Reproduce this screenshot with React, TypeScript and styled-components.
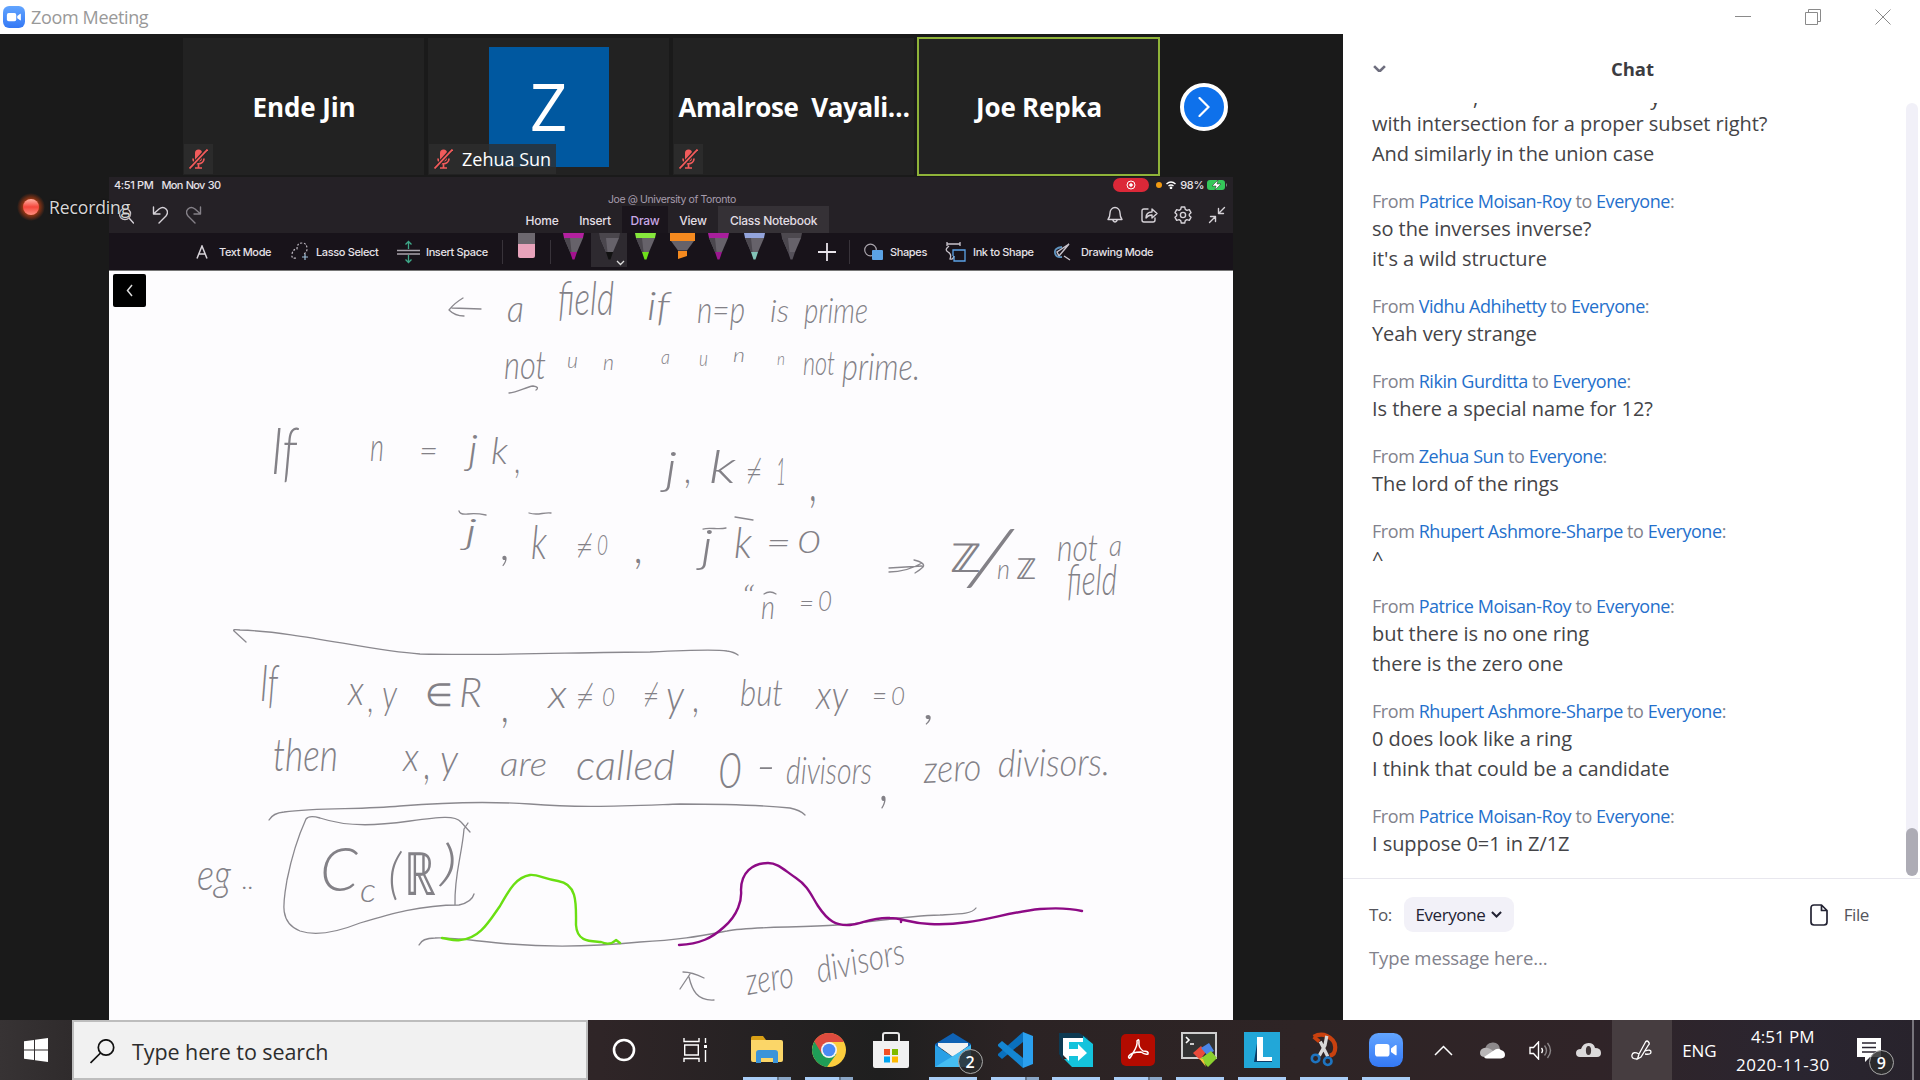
import React from 'react';
import styled, { createGlobalStyle } from 'styled-components';

const ui = `"Open Sans", "Noto Sans", sans-serif`;
const ios = `Inter, Roboto, sans-serif`;

const Global = createGlobalStyle`
  * { box-sizing: border-box; }
  body { margin: 0; background: #fff; font-family: ${ui}; }
  svg { display: block; flex: none; }
`;

const Screen = styled.div`
  width: 1920px;
  height: 1080px;
  display: flex;
  flex-direction: column;
  overflow: hidden;
`;

/* ---------- window title bar ---------- */
const TitleBar = styled.header`
  height: 34px;
  flex: none;
  display: flex;
  align-items: center;
  padding: 0 29px 0 3px;
  background: #fff;
`;
const WindowTitle = styled.span`
  margin-left: 6px;
  flex: 1;
  font-size: 18px;
  letter-spacing: -0.35px;
  color: #999;
`;
const WindowButtons = styled.div`
  display: flex;
  gap: 54px;
`;

const Body = styled.main`
  height: 986px;
  flex: none;
  display: flex;
`;

/* ---------- meeting side ---------- */
const Meeting = styled.section`
  position: relative;
  width: 1343px;
  background: #1a1a1a;
`;
const Gallery = styled.div`
  height: 143px;
  padding: 4px 0 0 183px;
  display: flex;
  gap: 4px;
`;
const Tile = styled.div<{ $active?: boolean }>`
  position: relative;
  width: 241px;
  height: 137px;
  display: flex;
  align-items: center;
  justify-content: center;
  background: #222;
  outline: ${(p) => (p.$active ? '2px solid #8fb339' : 'none')};
  outline-offset: -1px;
`;
const TileName = styled.span<{ $ls: number }>`
  padding-left: 1px;
  font-size: 26px;
  font-weight: 700;
  color: #fff;
  white-space: pre;
  letter-spacing: ${(p) => p.$ls}px;
`;
const Avatar = styled.div`
  width: 120px;
  height: 120px;
  display: flex;
  align-items: center;
  justify-content: center;
  background: #0058a0;
  color: #fff;
  font-size: 65px;
  line-height: 1;
`;
const Tag = styled.div`
  position: absolute;
  left: 1px;
  bottom: 1px;
  height: 30px;
  padding: 0 5px;
  display: flex;
  align-items: center;
  gap: 9px;
  background: rgba(46, 46, 46, 0.78);
  color: #fff;
  font-size: 18px;
  letter-spacing: 0;
`;
const NextButton = styled.div`
  margin: 45px 0 0 17px;
  width: 48px;
  height: 48px;
  border: 4px solid #fff;
  border-radius: 50%;
  background: #0e71eb;
  display: flex;
  align-items: center;
  justify-content: center;
`;
const Recording = styled.div`
  position: absolute;
  left: 17px;
  top: 157px;
  height: 32px;
  display: flex;
  align-items: center;
  gap: 4px;
  font-size: 17.5px;
  letter-spacing: -0.1px;
  color: #d8d8d8;
  text-shadow: 0 0 2px #000;
`;

/* ---------- shared iPad screen ---------- */
const Shared = styled.div`
  width: 1124px;
  height: 843px;
  margin-left: 109px;
  display: flex;
  flex-direction: column;
  font-family: ${ios};
  color: #e6e2e8;
`;
const StatusRow = styled.div`
  height: 16px;
  display: flex;
  align-items: center;
  background: #252126;
  padding: 0 5px 0 5px;
  font-size: 11px;
  font-weight: 500;
  letter-spacing: -0.35px;
`;
const StatusDate = styled.span`
  margin-left: 8px;
  letter-spacing: -0.75px;
  word-spacing: 1px;
`;
const StatusRight = styled.div`
  margin-left: auto;
  display: flex;
  align-items: center;
`;
const Percent = styled.span`
  margin: 0 3px 0 4px;
`;
const RecPill = styled.div`
  width: 36px;
  height: 14px;
  margin-right: -4px;
  position: relative;
  left: 0;
  border-radius: 7px;
  background: #dc2838;
  display: flex;
  align-items: center;
  justify-content: center;
`;
const OrangeDot = styled.i`
  width: 6px;
  height: 6px;
  margin: 0 4px 0 11px;
  border-radius: 50%;
  background: #f39a12;
`;
const Notebook = styled.div`
  height: 40px;
  background: #252126;
  display: flex;
`;
const NotebookSide = styled.div<{ $w: number; $gap: number; $pad: number }>`
  width: ${(p) => p.$w}px;
  padding: 13px 0 0 ${(p) => p.$pad}px;
  display: flex;
  gap: ${(p) => p.$gap}px;
`;
const NotebookMid = styled.div`
  width: 313px;
  display: flex;
  flex-direction: column;
`;
const NotebookTitle = styled.div`
  height: 13px;
  padding-left: 92px;
  font-size: 10.5px;
  line-height: 13px;
  color: #a79dad;
  letter-spacing: -0.4px;
  white-space: nowrap;
`;
const Tabs = styled.div`
  height: 27px;
  display: flex;
`;
const Tab = styled.div<{ $w: number; $bg?: string; $on?: boolean }>`
  width: ${(p) => p.$w}px;
  text-align: center;
  line-height: 29px;
  font-size: 12px;
  font-weight: 500;
  letter-spacing: -0.25px;
  white-space: nowrap;
  background: ${(p) => p.$bg ?? 'transparent'};
  color: ${(p) => (p.$on ? '#c9a8e6' : '#e2dee4')};
`;
const Tools = styled.div`
  height: 38px;
  background: #18131a;
  display: flex;
  border-bottom: 1px solid #777;
`;
const Tool = styled.div<{ $w: number; $gap?: number; $pad?: number }>`
  width: ${(p) => p.$w}px;
  height: 37px;
  padding-left: ${(p) => p.$pad ?? 0}px;
  display: flex;
  align-items: center;
  gap: ${(p) => p.$gap ?? 0}px;
  flex: none;
  font-size: 11px;
  font-weight: 500;
  letter-spacing: -0.37px;
  white-space: nowrap;
`;
const PenSlot = styled.div<{ $w: number; $on?: boolean }>`
  position: relative;
  width: ${(p) => p.$w}px;
  height: 34px;
  flex: none;
  display: flex;
  justify-content: center;
  background: ${(p) => (p.$on ? '#2e2a30' : 'transparent')};
`;
const PenCaret = styled.svg`
  position: absolute;
  right: 2px;
  bottom: 1px;
`;
const Rule = styled.i<{ $ml: number; $mr: number }>`
  width: 1px;
  height: 24px;
  flex: none;
  margin: 7px ${(p) => p.$mr}px 0 ${(p) => p.$ml}px;
  background: #38333a;
`;
const Page = styled.div`
  position: relative;
  height: 749px;
  background: #fdfcfe;
`;
const BackButton = styled.div`
  position: absolute;
  left: 4px;
  top: 3px;
  width: 33px;
  height: 33px;
  border-radius: 2px;
  background: #000;
  display: flex;
  align-items: center;
  justify-content: center;
`;
const InkWord = styled.text<{ $symbol: boolean }>`
  font-family: ${(p) => (p.$symbol ? '"DejaVu Sans Light", "DejaVu Sans", sans-serif' : 'Lato, "DejaVu Sans", sans-serif')};
  font-weight: ${(p) => (p.$symbol ? 200 : 300)};
  font-style: ${(p) => (p.$symbol ? 'normal' : 'italic')};
  fill: #838187;
`;

/* ---------- chat ---------- */
const Chat = styled.aside`
  flex: 1;
  display: flex;
  flex-direction: column;
  background: #fff;
`;
const ChatHead = styled.div`
  height: 69px;
  padding: 0 29px 0 30px;
  display: flex;
  align-items: center;
`;
const ChatTitle = styled.span`
  flex: 1;
  padding-left: 16px;
  padding-right: 28px;
  text-align: center;
  font-weight: 700;
  font-size: 18.5px;
  letter-spacing: -0.1px;
  color: #3c3c41;
`;
const Scroller = styled.div`
  height: 776px;
  display: flex;
  justify-content: space-between;
  border-bottom: 1px solid #e8e7ee;
  overflow: hidden;
`;
const Messages = styled.div`
  padding-left: 29px;
`;
const Clip = styled.div`
  height: 7px;
  display: flex;
  align-items: flex-end;
  overflow: hidden;
  font-size: 20px;
  line-height: 25px;
  color: #444;
`;
const ClipMark = styled.span<{ $ml: number }>`
  margin-left: ${(p) => p.$ml}px;
`;
const Group = styled.div`
  margin-bottom: 17px;
`;
const From = styled.div`
  height: 28px;
  line-height: 28px;
  font-size: 18px;
  letter-spacing: -0.44px;
  color: #82828c;
  white-space: nowrap;
`;
const Name = styled.span`
  color: #2470cc;
`;
const Line = styled.div`
  height: 30px;
  line-height: 28px;
  font-size: 20px;
  letter-spacing: -0.06px;
  color: #444447;
  white-space: nowrap;
`;
const Track = styled.div`
  width: 12px;
  margin-right: 2px;
  height: 773px;
  border-radius: 6px;
  background: #f1f0f8;
  display: flex;
  align-items: flex-end;
`;
const Thumb = styled.div`
  width: 12px;
  height: 48px;
  border-radius: 6px;
  background: #adacb5;
`;
const Compose = styled.div`
  padding: 18px 51px 0 26px;
`;
const ToRow = styled.div`
  height: 35px;
  display: flex;
  align-items: center;
  font-size: 17px;
  letter-spacing: -0.4px;
  color: #55555c;
`;
const Picker = styled.div`
  width: 110px;
  height: 35px;
  margin-left: 12px;
  border-radius: 9px;
  background: #f2f1f8;
  display: flex;
  align-items: center;
  justify-content: center;
  gap: 6px;
  color: #232333;
`;
const FileButton = styled.div`
  margin-left: auto;
  display: flex;
  align-items: center;
  gap: 16px;
`;
const Placeholder = styled.div`
  margin-top: 13px;
  font-size: 18.5px;
  letter-spacing: -0.12px;
  color: #82828c;
`;

/* ---------- taskbar ---------- */
const Taskbar = styled.footer`
  height: 60px;
  flex: none;
  display: flex;
  color: #fff;
  background: linear-gradient(90deg, #373334 0, #2f2b2c 72px, #2f2527 600px, #242122 780px, #1f1f1f 880px, #2b2324 1010px, #2e2425 1300px, #302428 1600px, #2a2530 1800px, #28232c 1920px);
`;
const Start = styled.div`
  width: 72px;
  flex: none;
  padding: 18px 0 0 24px;
`;
const Search = styled.div`
  width: 516px;
  flex: none;
  border: 2px solid #bdbdbd;
  background: #f1f1f1;
  display: flex;
  align-items: center;
  gap: 17px;
  padding: 2px 0 0 16px;
  font-size: 21.5px;
  letter-spacing: -0.08px;
  color: #2d2d2d;
`;
const SystemButton = styled.div<{ $w: number; $pr?: number }>`
  width: ${(p) => p.$w}px;
  padding-right: ${(p) => p.$pr ?? 0}px;
  flex: none;
  display: flex;
  align-items: center;
  justify-content: center;
`;
const AppSlot = styled.div`
  position: relative;
  width: 61.9px;
  flex: none;
  display: flex;
  flex-direction: column;
  align-items: center;
`;
const AppIcon = styled.div`
  height: 57px;
  padding-top: 3px;
  display: flex;
  align-items: center;
`;
const Running = styled.i<{ $stacked?: boolean }>`
  width: 48px;
  height: 3px;
  background: ${(p) => (p.$stacked ? 'linear-gradient(90deg,#a9cdf6 34px,#64788f 34px,#64788f 36px,#8aa6c6 36px)' : '#a9cdf6')};
`;
const Badge = styled.div<{ $x: number; $y: number }>`
  position: absolute;
  left: ${(p) => p.$x}px;
  top: ${(p) => p.$y}px;
  width: 25px;
  height: 25px;
  border: 1px solid #a9a9a9;
  border-radius: 50%;
  background: rgba(42, 42, 44, 0.85);
  display: flex;
  align-items: center;
  justify-content: center;
  font-size: 16px;
  font-weight: 600;
`;
const TrayCell = styled.div<{ $w: number; $bg?: string }>`
  width: ${(p) => p.$w}px;
  flex: none;
  display: flex;
  align-items: center;
  justify-content: center;
  background: ${(p) => p.$bg ?? 'transparent'};
  font-size: 17px;
  letter-spacing: -0.2px;
`;
const Clock = styled.div`
  width: 110px;
  flex: none;
  display: flex;
  flex-direction: column;
  align-items: center;
  padding-top: 3px;
  font-size: 17px;
  line-height: 28px;
  letter-spacing: 0;
`;
const ClockDate = styled.span`
  letter-spacing: 0.5px;
`;
const Notify = styled.div`
  position: relative;
  flex: 1;
  padding: 18px 0 0 19px;
`;
const PeekLine = styled.i`
  width: 2px;
  margin-right: 6px;
  background: #77757c;
`;

const Camera = ({ s }: { s: number }) => (
  <svg width={s} height={s} viewBox="0 0 34 34">
    <defs>
      <linearGradient id="zm" x1="0" y1="0" x2="0" y2="1">
        <stop offset="0" stopColor="#62a5ff" />
        <stop offset="1" stopColor="#3478f5" />
      </linearGradient>
    </defs>
    <rect width="34" height="34" rx="9.5" fill="url(#zm)" />
    <rect x="6" y="11" width="14.5" height="12.5" rx="2.8" fill="#fff" />
    <path d="M22 15.5l4.6-3.4q1-.5 1 .6v9q0 1-1 .5L22 19z" fill="#fff" />
  </svg>
);

const Muted = () => (
  <svg width="19" height="20" viewBox="0 0 19 20" fill="none" stroke="#f25b5b">
    <rect x="6" y="0.5" width="7" height="12" rx="3.5" fill="#f25b5b" stroke="none" />
    <path d="M4 9.5c0 7 11 7 11 0M9.5 15v3.5M6 19h7" strokeWidth="1.7" />
    <path d="M0 20.5L18 0.5" stroke="#262626" strokeWidth="4" />
    <path d="M0.5 19.5L18.5 0.5" strokeWidth="1.8" />
  </svg>
);

const Chevron = ({ w = 12, c = '#6e6e7e', sw = 2.4 }: { w?: number; c?: string; sw?: number }) => (
  <svg width={w} height={w * 0.6} viewBox="0 0 12 7.2" fill="none">
    <path d="M1 1l5 5 5-5" stroke={c} strokeWidth={sw} />
  </svg>
);

const Pen = ({ cap, tip }: { cap: string; tip: string }) => (
  <svg width="21" height="28" viewBox="0 0 21 28">
    <path d="M0 0h21l-1 5H1z" fill={cap} />
    <path d="M1 5h19l-6 14H7z" fill="#66626a" />
    <path d="M7 5l1.500 14H7L1 5z" fill="#4b474e" />
    <path d="M7 19h7l-2.500 7.500h-2z" fill={tip} />
  </svg>
);
const Marker = () => (
  <svg width="25" height="28" viewBox="0 0 25 28">
    <path d="M0 0h25v8H0z" fill="#f58a1f" />
    <path d="M1 8h23l-7 9.500H8z" fill="#66626a" />
    <path d="M8 18h9v5l-9 3z" fill="#f58a1f" />
  </svg>
);

/* [x, baseline, width, font size, characters, rotation] */
type Word = [number, number, number, number, string, number?];
const words: Word[] = [
  [507, 322, 17, 38, 'a'], [558, 315, 56, 47, 'field'], [647, 320, 23, 40, 'if'], [697, 323, 48, 38, 'n=p'],
  [770, 322, 19, 31, 'is'], [804, 323, 64, 36, 'prime'],
  [504, 379, 42, 40, 'not'], [567, 368, 11, 22, 'u'], [603, 370, 11, 22, 'n'], [661, 364, 9, 19, 'a'],
  [699, 366, 9, 21, 'u'], [733, 362, 12, 20, 'n'], [777, 365, 8, 17, 'n'], [803, 375, 32, 34, 'not'], [842, 380, 78, 38, 'prime.'],
  [271, 474, 26, 66, 'If'], [370, 461, 14, 40, 'n'], [419, 462, 19, 34, '='], [468, 464, 10, 42, 'j'], [491, 464, 17, 37, 'k'], [515, 473, 6, 42, ','],
  [665, 484, 12, 46, 'j'], [685, 483, 7, 42, ','], [709, 483, 27, 46, 'k'], [746, 483, 16, 34, '≠'], [776, 485, 10, 38, '1'], [810, 501, 8, 58, ','],
  [465, 544, 12, 36, 'j'], [501, 560, 10, 50, ','], [531, 559, 16, 48, 'k'], [576, 557, 17, 32, '≠'], [597, 555, 11, 27, '0'], [635, 563, 9, 50, ','],
  [701, 562, 12, 46, 'j'], [734, 558, 18, 43, 'k'], [766, 554, 25, 32, '='], [797, 553, 24, 31, '0'],
  [950, 572, 31, 40, 'ℤ'], [967, 585, 46, 76, '/'], [997, 579, 13, 28, 'n'], [1016, 579, 20, 29, 'ℤ'],
  [1057, 561, 41, 38, 'not'], [1109, 556, 13, 30, 'a'], [1067, 595, 50, 44, 'field'],
  [741, 608, 13, 32, '“'], [761, 619, 14, 34, 'n'], [799, 613, 15, 27, '='], [818, 611, 14, 27, '0'],
  [260, 701, 18, 52, 'If'], [348, 705, 16, 42, 'x'], [368, 712, 6, 42, ','], [382, 709, 15, 42, 'y'], [425, 706, 28, 32, '∈'], [459, 707, 23, 41, 'R'], [502, 722, 8, 50, ','],
  [548, 708, 19, 40, 'x'], [576, 708, 18, 34, '≠'], [602, 706, 13, 26, '0'], [643, 706, 16, 32, '≠'], [666, 711, 18, 44, 'y'], [693, 712, 7, 44, ','],
  [740, 706, 43, 37, 'but'], [816, 709, 32, 40, 'xy'], [872, 706, 15, 30, '='], [891, 705, 14, 25, '0'], [924, 719, 12, 46, ','],
  [273, 771, 65, 46, 'then'], [403, 771, 16, 40, 'x'], [424, 779, 7, 48, ','], [440, 774, 18, 42, 'y'], [500, 776, 47, 34, 'are'], [576, 780, 99, 42, 'called'],
  [718, 788, 24, 50, '0'], [756, 782, 20, 46, '-'], [786, 784, 86, 38, 'divisors'], [880, 801, 10, 62, ','],
  [924, 783, 58, 38, 'zero', -3], [998, 777, 112, 38, 'divisors.', -1],
  [197, 890, 34, 43, 'eg'], [242, 889, 12, 26, '..'],
  [320, 891, 38, 61, 'C'], [360, 902, 16, 34, 'c'], [388, 893, 13, 56, '('], [404, 895, 32, 60, 'ℝ'], [440, 880, 17, 50, ')'],
  [748, 995, 48, 38, 'zero', -10], [819, 983, 90, 36, 'divisors', -13],
];
const symbols = ['≠', 'ℤ', 'ℝ', '∈'];

const strokes = [
  'M463 298C458 301 452 306 449 310C453 314 458 316 464 316M452 308L481 309',
  'M509 393C518 392 526 387 533 386Q540 387 536 390',
  'M459 511Q460 515 468 514T486 515', 'M529 513C538 516 543 512 551 513',
  'M703 529C710 527 718 530 726 528', 'M735 517L753 520', 'M764 594Q770 590 776 594',
  'M889 568L922 566M889 572C900 572 910 570 922 563M914 560Q926 563 923 567Q920 570 915 573',
  'M246 642L234 631Q232 629 240 630C300 632 370 651 420 654C500 656 580 652 650 652C690 650 715 649 727 651Q734 652 738 655',
  'M269 820Q273 813 284 812C320 807 360 810 400 806C450 802 500 802 530 804C580 808 620 806 680 804C730 804 770 806 790 808Q800 810 805 815',
  'M474 894Q472 902 459 905C420 905 390 914 360 923C335 933 315 936 300 931C279 923 283 903 287 880C293 850 301 830 306 819Q309 815 320 818C350 828 380 825 410 821C440 817 455 815 461 822L470 832M468 823L464 829C462 855 454 875 455 905',
  'M419 945Q422 938 435 938C455 937 480 942 510 944C560 948 600 946 640 942C680 940 700 936 727 931C750 926 800 928 837 925C870 923 900 916 940 915C960 914 972 914 976 908',
  'M680 989L690 974M683 972Q692 972 704 978M689 977C692 990 697 1001 714 1000',
];

const Ink = () => (
  <svg width="1124" height="749" viewBox="109 271 1124 749" fill="none" strokeLinecap="round" strokeLinejoin="round">
    {words.map(([x, y, w, s, t, r], i) => (
      <InkWord
        key={i}
        $symbol={symbols.includes(t)}
        x={x}
        y={y}
        fontSize={s}
        textLength={w}
        lengthAdjust="spacingAndGlyphs"
        transform={r ? `rotate(${r} ${x} ${y})` : undefined}
      >
        {t}
      </InkWord>
    ))}
    {strokes.map((d) => (
      <path key={d} d={d} stroke="#8a888e" strokeWidth="1.3" />
    ))}
    <path d="M442 938C450 939 453 941 460 940C480 939 490 920 500 906C510 888 517 877 530 875C537 874 544 879 558 881C578 884 576 905 576 925C577 942 590 941 601 942Q610 946 616 940L620 943" stroke="#6adf12" strokeWidth="2.400" />
    <path d="M679 945C700 944 712 938 724 927C738 915 742 900 741 890C741 873 752 863 768 863C778 863 784 870 796 878C808 886 811 895 818 906C828 921 836 926 850 925C862 924 872 917 890 918C902 918 908 923 930 924C975 926 1000 913 1040 909Q1065 907 1082 911M901 920v2" stroke="#8d0a85" strokeWidth="2.400" />
  </svg>
);

const iconStroke = { fill: 'none', stroke: '#d6d2d8', strokeWidth: 1.4, strokeLinecap: 'round', strokeLinejoin: 'round' } as const;

const SharedScreen = () => (
  <Shared>
    <StatusRow>
      <span>4:51 PM</span>
      <StatusDate>Mon Nov 30</StatusDate>
      <StatusRight>
        <RecPill>
          <svg width="10" height="10" viewBox="0 0 10 10" fill="none" stroke="#fff"><circle cx="5" cy="5" r="4" /><circle cx="5" cy="5" r="1.300" fill="#fff" /></svg>
        </RecPill>
        <OrangeDot />
        <svg width="10" height="8" viewBox="0 0 10 8" fill="none" stroke="#fff" strokeWidth="1.500"><path d="M0.500 3Q5-1 9.500 3M2.500 5Q5 3 7.500 5" /><circle cx="5" cy="6.800" r=".6" fill="#fff" /></svg>
        <Percent>98%</Percent>
        <svg width="21" height="10" viewBox="0 0 21 10"><rect width="18" height="10" rx="3" fill="#34c759" /><path d="M19 3q2 2 0 4z" fill="#7d8a80" /><path d="M11 0L5 6h4l-1 4 6-6h-4z" fill="#fff" stroke="#252126" strokeWidth=".5" /></svg>
      </StatusRight>
    </StatusRow>
    <Notebook>
      <NotebookSide $w={407} $gap={18} $pad={9}>
        <svg width="16" height="18" viewBox="0 0 16 18" {...iconStroke}><circle cx="7" cy="8" r="5.500" /><path d="M11 12l4.500 5M4.500 8h5" /></svg>
        <svg width="16" height="18" viewBox="0 0 16 18" {...iconStroke}><path d="M1.500 1v7H8M2 7.500L7 3q4-3 7 0t0 7L7 17" /></svg>
        <svg width="16" height="18" viewBox="0 0 16 18" {...iconStroke} stroke="#858188"><path d="M14.500 1v7H8M14 7.500L9 3Q5 0 2 3t0 7L9 17" /></svg>
      </NotebookSide>
      <NotebookMid>
        <NotebookTitle>Joe @ University of Toronto</NotebookTitle>
        <Tabs>
          <Tab $w={52}>Home</Tab>
          <Tab $w={54}>Insert</Tab>
          <Tab $w={46} $bg="#1a151c" $on>Draw</Tab>
          <Tab $w={50}>View</Tab>
          <Tab $w={111} $bg="#353136">Class Notebook</Tab>
        </Tabs>
      </NotebookMid>
      <NotebookSide $w={404} $gap={16} $pad={277}>
        <svg width="18" height="18" viewBox="0 0 18 18" {...iconStroke}><path d="M2 13.500Q4 11 4 7a5 5.500 0 0 1 10 0q0 4 2 6.500zM7 14.500q2 3 4 0" /></svg>
        <svg width="18" height="18" viewBox="0 0 18 18" {...iconStroke}><path d="M8 3H4Q2 3 2 5v9q0 2 2 2h9q2 0 2-2v-2M6 12q0-6 6-6V3l5 4.500-5 4.500V9q-4 0-6 3z" /></svg>
        <svg width="18" height="18" viewBox="0 0 18 18" {...iconStroke}><circle cx="9" cy="9" r="2.600" /><path d="M7.300 1h3.400l.6 2.400 1.600 1 2.400-.7 1.700 3-1.700 1.600v1.400l1.700 1.600-1.700 3-2.400-.7-1.600 1-.6 2.400H7.300l-.6-2.400-1.600-1-2.400.7-1.700-3 1.700-1.600V8.300L1 6.700l1.700-3 2.400.7 1.600-1z" /></svg>
        <svg width="18" height="18" viewBox="0 0 18 18" {...iconStroke}><path d="M16.500 1.500l-6 6M10.500 2.500v5h5M1.500 16.500l6-6M2.500 10.500h5v5" /></svg>
      </NotebookSide>
    </Notebook>
    <Tools>
      <Tool $w={182} $pad={87} $gap={11}>
        <svg width="12" height="14" viewBox="0 0 12 14" fill="none" stroke="#d6d2d8" strokeWidth="1.500"><path d="M1 13.500L6 1l5 12.500M3 9h6" /></svg>
        Text Mode
      </Tool>
      <Tool $w={106} $gap={7}>
        <svg width="18" height="20" viewBox="0 0 18 20" fill="none" stroke="#bdb8c0" strokeWidth="1.200"><path d="M5 16Q0 17 1 12t5-5q0-6 5-6t5 6q0 4-4 5" strokeDasharray="2 1.600" /><path d="M14 12v6M11 15h6" stroke="#9fc0d8" /></svg>
        Lasso Select
      </Tool>
      <Tool $w={105} $gap={6}>
        <svg width="23" height="24" viewBox="0 0 23 24" fill="none" strokeWidth="1.300"><path d="M0 10.500h23M0 14h23" stroke="#a9a4ac" /><path d="M11.500 9V1.500M8.500 4.500l3-3 3 3M11.500 15v7.500M8.500 19.500l3 3 3-3" stroke="#3fa889" /></svg>
        Insert Space
      </Tool>
      <Rule $ml={0} $mr={12} />
      <PenSlot $w={23}>
        <svg width="17" height="26" viewBox="0 0 17 26"><path d="M0 0h17v12H0z" fill="#6d686f" /><path d="M0 11h17v12q0 2-2 2H2q-2 0-2-2z" fill="#e8a3bb" /></svg>
      </PenSlot>
      <Rule $ml={12} $mr={12} />
      <PenSlot $w={20}><Pen cap="#b3219f" tip="#a3128e" /></PenSlot>
      <PenSlot $w={8} />
      <PenSlot $w={36} $on>
        <Pen cap="#4a464c" tip="#111" />
        <PenCaret width="9" height="6" viewBox="0 0 9 6" fill="none"><path d="M1 1l3.500 3.500L8 1" stroke="#ddd" strokeWidth="1.300" /></PenCaret>
      </PenSlot>
      <PenSlot $w={37}><Pen cap="#86e83c" tip="#6fdf1c" /></PenSlot>
      <PenSlot $w={37}><Marker /></PenSlot>
      <PenSlot $w={35}><Pen cap="#a81f9c" tip="#9a178f" /></PenSlot>
      <PenSlot $w={37}><Pen cap="#93a4dc" tip="#82c2b6" /></PenSlot>
      <PenSlot $w={36}><Pen cap="#4d494f" tip="#55515a" /></PenSlot>
      <Tool $w={40} $pad={9}>
        <svg width="18" height="18" viewBox="0 0 18 18"><path d="M9 0v18M0 9h18" stroke="#e8e4ea" strokeWidth="1.800" /></svg>
      </Tool>
      <Rule $ml={0} $mr={14} />
      <Tool $w={81} $gap={7}>
        <svg width="19" height="18" viewBox="0 0 19 18"><circle cx="6.500" cy="7" r="5.800" fill="none" stroke="#aaa5ad" strokeWidth="1.200" /><rect x="8" y="7" width="11" height="10" rx="1" fill="#5ba3e6" /></svg>
        Shapes
      </Tool>
      <Tool $w={109} $gap={7}>
        <svg width="21" height="21" viewBox="0 0 21 21" fill="none" strokeWidth="1.300"><path d="M2 3h13M2 1v4M15 1v4M4 5Q-1 9 3 11t2 7q3 1 4-3" stroke="#c9c4cc" /><path d="M8 15V9h12v11H9v-5" stroke="#5ba3e6" /></svg>
        Ink to Shape
      </Tool>
      <Tool $w={110} $gap={10}>
        <svg width="17" height="18" viewBox="0 0 17 18" fill="none"><path d="M15 1L3 9l2 4 5-6zM10 13l6 4" stroke="#c9c4cc" strokeWidth="1.400" /><path d="M8 4Q0 5 1 10t7 4" stroke="#5f93bf" strokeWidth="1.800" /></svg>
        Drawing Mode
      </Tool>
    </Tools>
    <Page>
      <Ink />
      <BackButton>
        <svg width="8" height="13" viewBox="0 0 8 13" fill="none"><path d="M6 1L1.500 6.500 6 12" stroke="#ddd" strokeWidth="1.500" /></svg>
      </BackButton>
    </Page>
  </Shared>
);

const groups: { from: string; lines: string[] }[] = [
  { from: 'Patrice Moisan-Roy', lines: ['so the inverses inverse?', "it's a wild structure"] },
  { from: 'Vidhu Adhihetty', lines: ['Yeah very strange'] },
  { from: 'Rikin Gurditta', lines: ['Is there a special name for 12?'] },
  { from: 'Zehua Sun', lines: ['The lord of the rings'] },
  { from: 'Rhupert Ashmore-Sharpe', lines: ['^'] },
  { from: 'Patrice Moisan-Roy', lines: ['but there is no one ring', 'there is the zero one'] },
  { from: 'Rhupert Ashmore-Sharpe', lines: ['0 does look like a ring', 'I think that could be a candidate'] },
  { from: 'Patrice Moisan-Roy', lines: ['I suppose 0=1 in Z/1Z'] },
];

const ExplorerIcon = () => (
  <svg width="32" height="28" viewBox="0 0 32 28"><path d="M0 2q0-2 2-2h10l3 4H0z" fill="#d9a016" /><path d="M0 4h30q2 0 2 2v18q0 2-2 2H2q-2 0-2-2z" fill="#fbd668" /><path d="M5 27V17q0-3 3-3h16q3 0 3 3v10h-5v-5H10v5z" fill="#3b94d9" /></svg>
);
const ChromeIcon = () => (
  <svg width="34" height="34" viewBox="0 0 34 34"><circle cx="17" cy="17" r="17" fill="#fccd3d" /><path d="M17 17L2.300 8.500A17 17 0 0 0 15 33.900L24.400 21z" fill="#1f9d57" /><path d="M17 17L2.300 8.500A17 17 0 0 1 31.700 8.500L17 9z" fill="#dd4b3e" /><path d="M2.300 8.500L10 21 17 9h14.700A17 17 0 0 0 2.300 8.500z" fill="#dd4b3e" /><circle cx="17" cy="17" r="8" fill="#f4f4f4" /><circle cx="17" cy="17" r="6.300" fill="#4a8af4" /></svg>
);
const StoreIcon = () => (
  <svg width="36" height="36" viewBox="0 0 36 36"><path d="M10 10V3q0-2 2-2h12q2 0 2 2v7" fill="none" stroke="#e6e6e6" strokeWidth="2" /><path d="M0 9h36v25q0 2-2 2H2q-2 0-2-2z" fill="#f1f1f1" /><path d="M11 17h6v6h-6z" fill="#f25022" /><path d="M19 17h6v6h-6z" fill="#7fba00" /><path d="M11 24.500h6v6h-6z" fill="#00a4ef" /><path d="M19 24.500h6v6h-6z" fill="#ffb900" /></svg>
);
const MailIcon = () => (
  <svg width="36" height="34" viewBox="0 0 36 34"><path d="M0 11L18 0l18 11v5H0z" fill="#0f62b4" /><path d="M3 10h30v3L18 24 3 13z" fill="#f2f2f2" /><path d="M0 12v22h36V12L18 24z" fill="#2aa0e6" /><path d="M0 34L36 12v22z" fill="#45bdf2" /></svg>
);
const CodeIcon = () => (
  <svg width="36" height="36" viewBox="0 0 36 36"><path d="M26 0l10 4v28l-10 4z" fill="#2ba0ee" /><path d="M26 0v10L5 27l-4-3.500v-1.500z" fill="#0a70bd" /><path d="M26 36V26L5 9l-4 3.500V14z" fill="#1486d2" /></svg>
);
const ArrowAppIcon = () => (
  <svg width="34" height="34" viewBox="0 0 34 34"><path d="M0 0h20l9 5v4H4v18l-4-6z" fill="#0d3a52" /><path d="M24 3l10 8v23H13L5 26h4V8h15z" fill="#14c3dc" /><path d="M4 5h20v4H10v7h9v-5l9 9-9 8v-5h-9v5l-6-6z" fill="#fff" /></svg>
);
const AcrobatIcon = () => (
  <svg width="34" height="32" viewBox="0 0 34 32"><rect width="34" height="32" rx="5" fill="#b30b00" /><path d="M8 24q-2-2 4-5 5-8 4-12 2-3 2 1-1 5 4 9 6 0 5 3-3 1-7-2-5 0-8 1-3 6-4 5z" fill="none" stroke="#fff" strokeWidth="1.500" /></svg>
);
const TerminalIcon = () => (
  <svg width="38" height="36" viewBox="0 0 38 36"><rect x="1" y="1" width="34" height="25" fill="#333" stroke="#cfcfcf" strokeWidth="2" /><path d="M5 5l3 3-3 3M9 12h4" stroke="#fff" strokeWidth="1.600" fill="none" /><path d="M12 21l8-7 5 6-6 8z" fill="#ea4b3b" /><path d="M20 16l8-5 5 8-7 4z" fill="#4a86e8" /><path d="M19 27l7-5 4-3 6 7-9 9z" fill="#8bd12f" /><path d="M18 26l7 9-3-8z" fill="#f5c33b" /></svg>
);
const LIcon = () => (
  <svg width="36" height="36" viewBox="0 0 36 36"><rect width="36" height="36" fill="#22a7d8" /><path d="M10 30l4-25h5v20h9v5z" fill="#0b3c66" /><path d="M13 5h6v20h9v4H13z" fill="#fff" /></svg>
);
const SnipIcon = () => (
  <svg width="30" height="36" viewBox="0 0 32 36" fill="none"><path d="M5 4Q12 0 19 3q9 4 9 12t-6 9" stroke="#c9410f" strokeWidth="4.500" /><path d="M5 4l6 5" stroke="#c9410f" strokeWidth="4" /><path d="M19 3l-2 10-6 11M12 9l8 16" stroke="#d8d8d8" strokeWidth="3.500" /><circle cx="7" cy="27" r="4" stroke="#1e74c0" strokeWidth="2.800" /><circle cx="20" cy="30" r="4" stroke="#1e74c0" strokeWidth="2.800" /></svg>
);

const apps: { icon: React.ReactNode; run?: boolean; stacked?: boolean; badge?: string }[] = [
  { icon: <ExplorerIcon />, run: true, stacked: true },
  { icon: <ChromeIcon />, run: true, stacked: true },
  { icon: <StoreIcon /> },
  { icon: <MailIcon />, run: true, badge: '2' },
  { icon: <CodeIcon />, run: true, stacked: true },
  { icon: <ArrowAppIcon />, run: true },
  { icon: <AcrobatIcon />, run: true, stacked: true },
  { icon: <TerminalIcon />, run: true },
  { icon: <LIcon />, run: true },
  { icon: <SnipIcon />, run: true },
  { icon: <Camera s={34} />, run: true },
];

export default function App() {
  return (
    <Screen>
      <Global />
      <TitleBar>
        <Camera s={22} />
        <WindowTitle>Zoom Meeting</WindowTitle>
        <WindowButtons>
          <svg width="16" height="16" viewBox="0 0 16 16"><path d="M0 7.500h16" stroke="#8a8a8a" /></svg>
          <svg width="16" height="16" viewBox="0 0 16 16" fill="none" stroke="#8a8a8a"><path d="M0.500 3.500h12v12h-12zM3.500 3.500v-3h12v12h-3" /></svg>
          <svg width="16" height="16" viewBox="0 0 16 16" stroke="#8a8a8a"><path d="M0.500 0.500l15 15M15.500 0.500l-15 15" /></svg>
        </WindowButtons>
      </TitleBar>
      <Body>
        <Meeting>
          <Gallery>
            <Tile><TileName $ls={-0.1}>Ende Jin</TileName><Tag><Muted /></Tag></Tile>
            <Tile><Avatar>Z</Avatar><Tag><Muted />Zehua Sun</Tag></Tile>
            <Tile><TileName $ls={-0.4}>Amalrose  Vayali…</TileName><Tag><Muted /></Tag></Tile>
            <Tile $active><TileName $ls={-0.2}>Joe Repka</TileName></Tile>
            <NextButton>
              <svg width="12" height="20" viewBox="0 0 12 20" fill="none"><path d="M1.500 1l9 9-9 9" stroke="#fff" strokeWidth="2.200" strokeLinecap="round" /></svg>
            </NextButton>
          </Gallery>
          <SharedScreen />
          <Recording>
            <svg width="28" height="32" viewBox="0 0 28 32">
              <defs>
                <radialGradient id="glow"><stop offset=".5" stopColor="#a83a12" /><stop offset="1" stopColor="#a83a12" stopOpacity="0" /></radialGradient>
                <linearGradient id="bulb" x1="0" y1="0" x2="0" y2="1"><stop offset="0" stopColor="#ffb3a5" /><stop offset=".5" stopColor="#f4473c" /><stop offset="1" stopColor="#ff8f80" /></linearGradient>
              </defs>
              <circle cx="14" cy="16" r="14" fill="url(#glow)" />
              <circle cx="14" cy="16" r="8" fill="url(#bulb)" />
            </svg>
            Recording
          </Recording>
        </Meeting>
        <Chat>
          <ChatHead>
            <Chevron w={13} />
            <ChatTitle>Chat</ChatTitle>
          </ChatHead>
          <Scroller>
            <Messages>
              <Clip><ClipMark $ml={101}>,</ClipMark><ClipMark $ml={172}>y</ClipMark></Clip>
              <Group>
                <Line>with intersection for a proper subset right?</Line>
                <Line>And similarly in the union case</Line>
              </Group>
              {groups.map((g, i) => (
                <Group key={i}>
                  <From>From <Name>{g.from}</Name> to <Name>Everyone</Name>:</From>
                  {g.lines.map((l) => <Line key={l}>{l}</Line>)}
                </Group>
              ))}
            </Messages>
            <Track><Thumb /></Track>
          </Scroller>
          <Compose>
            <ToRow>
              To:
              <Picker>Everyone <Chevron w={11} c="#232333" sw={2.2} /></Picker>
              <FileButton>
                <svg width="18" height="22" viewBox="0 0 18 22" fill="none" stroke="#232333" strokeWidth="1.700"><path d="M11.500 1H4Q1 1 1 4v14q0 3 3 3h10q3 0 3-3V6.500zM11.500 1v5.500H17" strokeLinejoin="round" /></svg>
                File
              </FileButton>
            </ToRow>
            <Placeholder>Type message here…</Placeholder>
          </Compose>
        </Chat>
      </Body>
      <Taskbar>
        <Start>
          <svg width="24" height="24" viewBox="0 0 24 24" fill="#fff"><path d="M0 3.300l10-1.400v9.600H0zM11 1.800L24 0v11.500H11zM0 12.500h10v9.600L0 20.700zM11 12.500h13V24l-13-1.800z" /></svg>
        </Start>
        <Search>
          <svg width="25" height="25" viewBox="0 0 25 25" fill="none" stroke="#111" strokeWidth="1.700"><circle cx="16" cy="8.500" r="7.700" /><path d="M10.500 14L0.500 24" /></svg>
          Type here to search
        </Search>
        <SystemButton $w={72}>
          <svg width="24" height="24" viewBox="0 0 24 24"><circle cx="12" cy="12" r="10" fill="none" stroke="#fff" strokeWidth="2.600" /></svg>
        </SystemButton>
        <SystemButton $w={76} $pr={5}>
          <svg width="25" height="24" viewBox="0 0 25 24" fill="none" stroke="#fff" strokeWidth="1.400"><path d="M1 0v3.500h15V0M1 24v-3.500h15V24M1.700 7h13.600v10H1.700zM22.500 0v5M22.500 12v12" /><path d="M21 7h3v3h-3z" fill="#fff" stroke="none" /></svg>
        </SystemButton>
        {apps.map((a, i) => (
          <AppSlot key={i}>
            <AppIcon>{a.icon}</AppIcon>
            {a.run && <Running $stacked={a.stacked} />}
            {a.badge && <Badge $x={36} $y={29}>{a.badge}</Badge>}
          </AppSlot>
        ))}
        <TrayCell $w={54}>
          <svg width="19" height="11" viewBox="0 0 19 11" fill="none"><path d="M1 10L9.500 1.500 18 10" stroke="#fff" strokeWidth="1.500" /></svg>
        </TrayCell>
        <TrayCell $w={44}>
          <svg width="25" height="17" viewBox="0 0 25 17"><path d="M5 9q0-8 7.500-8.500Q19 0 20 7L10 12z" fill="#8d898b" /><path d="M5 15Q0 15 0 11t4-5q5-1 10 4z" fill="#b9b6b7" /><path d="M4 15l9-6q5-4 8-1 4 1 4 5 0 3-4 3.500H7Q5 16.500 4 15z" fill="#fff" /></svg>
        </TrayCell>
        <TrayCell $w={51}>
          <svg width="23" height="19" viewBox="0 0 23 19" fill="none" stroke="#fff" strokeWidth="1.400"><path d="M1 6.500h3.500L9.500 1v17L4.500 12.500H1zM12.500 7q2 2.500 0 5" /><path d="M15.500 4.500q4 5 0 10M18.500 2q6 7.500 0 15" stroke="#8a8587" /></svg>
        </TrayCell>
        <TrayCell $w={46}>
          <svg width="25" height="15" viewBox="0 0 25 15"><path d="M4 14Q0 14 0 10t5-4Q7 0 12.500 0T19 5q6 0 6 5 0 4-4 4z" fill="#dcdadb" /><ellipse cx="12.500" cy="7.500" rx="2.600" ry="4.500" fill="#403638" /></svg>
        </TrayCell>
        <TrayCell $w={60} $bg="#463d40">
          <svg width="21" height="21" viewBox="0 0 21 21" fill="none" stroke="#fff" strokeWidth="1.300"><path d="M8 14L14.500 2q1.500-2 3 0t0 3L10 17l-3.500 2zM8 14q-6-3-7 1t5 4M14 11q6-2 6 1t-6 2" /></svg>
        </TrayCell>
        <TrayCell $w={55}>ENG</TrayCell>
        <SystemButton $w={1} />
        <Clock><span>4:51 PM</span><ClockDate>2020-11-30</ClockDate></Clock>
        <Notify>
          <svg width="24" height="24" viewBox="0 0 24 24"><path d="M0 0h24v19H13l-5 5 0-5H0z" fill="#fff" /><path d="M5 5h14M5 9.500h14M5 14h14" stroke="#2a2530" strokeWidth="1.300" /></svg>
          <Badge $x={31} $y={30}>9</Badge>
        </Notify>
        <PeekLine />
      </Taskbar>
    </Screen>
  );
}
